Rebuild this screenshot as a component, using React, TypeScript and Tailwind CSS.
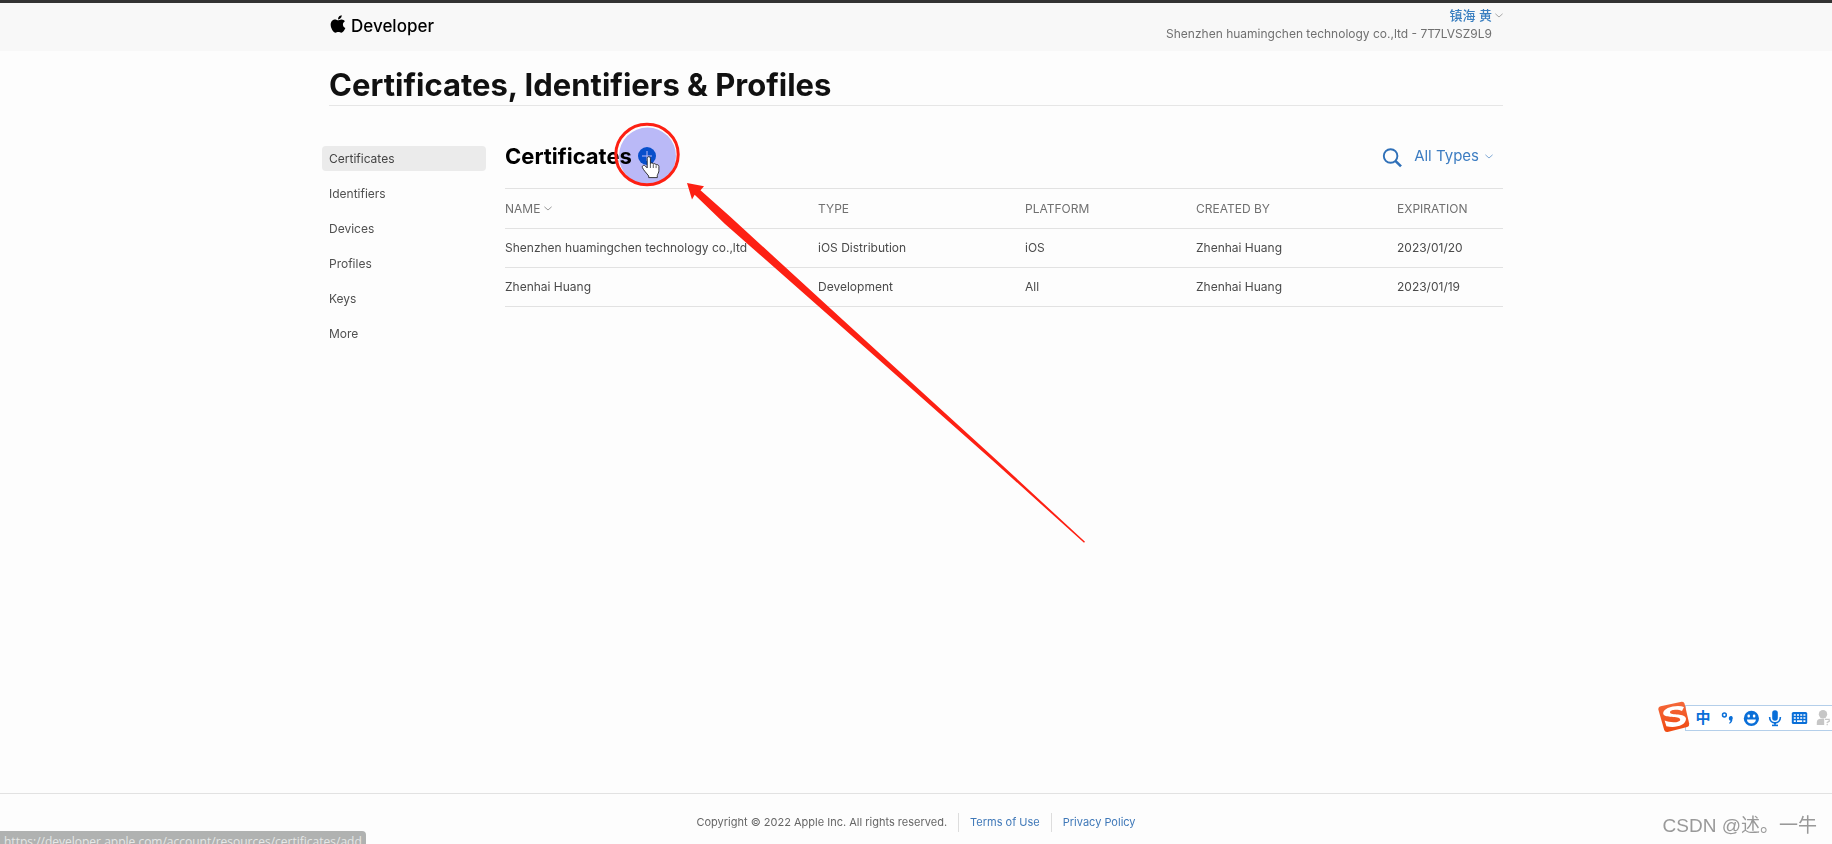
import { FaApple } from 'react-icons/fa';

type Certificate = {
  name: string;
  type: string;
  platform: string;
  createdBy: string;
  expiration: string;
};

const certificates: Certificate[] = [
  {
    name: 'Shenzhen huamingchen technology co.,ltd',
    type: 'iOS Distribution',
    platform: 'iOS',
    createdBy: 'Zhenhai Huang',
    expiration: '2023/01/20',
  },
  {
    name: 'Zhenhai Huang',
    type: 'Development',
    platform: 'All',
    createdBy: 'Zhenhai Huang',
    expiration: '2023/01/19',
  },
];

const sections = ['Certificates', 'Identifiers', 'Devices', 'Profiles', 'Keys', 'More'];

function Chevron({ className }: { className: string }) {
  return (
    <svg viewBox="0 0 8 5" className={className} fill="none" stroke="currentColor" aria-hidden="true">
      <path d="M0.4 0.8 L4 4 L7.6 0.8" />
    </svg>
  );
}

function Header() {
  return (
    <header className="border-t-[3px] border-[#333333] bg-[#f8f8f8]">
      <div className="mx-auto flex h-12 max-w-[1174px] items-start justify-between">
        <a href="#home" className="flex items-center gap-[3px] pt-[11px] text-[17px] leading-6 font-medium text-black">
          <FaApple className="-mt-1 -ml-px size-5" aria-hidden="true" />
          Developer
        </a>
        <div className="pt-1 text-right text-xs text-[#707070]">
          <button type="button" className="ml-auto flex items-center gap-[3px] text-[13px] leading-4 font-medium text-[#3a7fc0]">
            镇海 黄
            <Chevron className="h-[5px] w-2 text-[#a8a8a8]" />
          </button>
          <p className="pr-[11px] leading-[22px]">Shenzhen huamingchen technology co.,ltd - 7T7LVSZ9L9</p>
        </div>
      </div>
    </header>
  );
}

function Sidebar() {
  return (
    <nav aria-label="Resources" className="-ml-[7px] flex w-[164px] shrink-0 flex-col gap-[10px]">
      {sections.map((section, index) => (
        <a
          key={section}
          href={`#${section.toLowerCase()}`}
          aria-current={index === 0 ? 'page' : undefined}
          className={
            index === 0
              ? 'rounded-sm bg-[#ebebeb] px-[7px] leading-[25px] text-[#444444]'
              : 'px-[7px] leading-[25px] text-[#505050]'
          }
        >
          {section}
        </a>
      ))}
    </nav>
  );
}

function ClickHighlight() {
  return (
    <>
      <svg
        viewBox="0 0 66 66"
        className="pointer-events-none absolute -top-[23px] -left-6 size-[66px] max-w-none overflow-visible mix-blend-multiply"
        aria-hidden="true"
      >
        <circle cx="33.5" cy="32" r="28.5" fill="#bcbbf9" />
      </svg>
      <svg
        viewBox="0 0 66 66"
        className="pointer-events-none absolute -top-[23px] -left-6 size-[66px] max-w-none overflow-visible"
        aria-hidden="true"
      >
        <ellipse cx="33" cy="30.5" rx="31.2" ry="30.2" fill="none" stroke="#fd2013" strokeWidth="3" />
        <path
          d="M33.2 34.5 c0 -2.4 3.2 -2.4 3.2 0 v5 c.6 -1 2.7 -.8 2.9 .6 c.8 -.9 2.6 -.5 2.8 .8 c1 -.7 2.8 0 2.8 1.5 v4.4 c0 1.6 -1.2 3.2 -1.6 4.6 v2.2 h-8.6 v-1.6 c-1.8 -2.4 -5.2 -5.8 -6.3 -8.4 c-.6 -1.9 1.6 -3 3 -1.5 l1.8 1.8 z"
          fill="#ffffff"
          stroke="#222222"
          strokeWidth="0.9"
        />
        <path d="M36.4 39.5 v4.5 M39.3 40.5 v3.5 M42.1 41.5 v2.6" stroke="#333333" strokeWidth="0.8" />
      </svg>
      <svg
        viewBox="0 0 400 362"
        className="pointer-events-none absolute top-9 left-12 h-[362px] w-[400px] max-w-none"
        aria-hidden="true"
      >
        <path
          d="M1 0 L18 3.2 L14.5 7.2 L44 33.5 L157 137 L310.5 277 L399 358.8 L398 359.8 L306 277 L148 137 L39 41 L8.7 11.7 L6 16.5 Z"
          fill="#fd2013"
        />
      </svg>
    </>
  );
}

function CertificatesTable() {
  return (
    <table className="w-full table-fixed border-collapse text-left">
      <thead>
        <tr className="h-10 border-y border-[#e2e2e2] text-[#707070]">
          <th className="w-[313px] p-0 font-normal">
            <button type="button" className="flex items-center gap-1">
              NAME
              <Chevron className="h-[5px] w-2 text-[#999999]" />
            </button>
          </th>
          <th className="w-[207px] p-0 font-normal">TYPE</th>
          <th className="w-[171px] p-0 font-normal">PLATFORM</th>
          <th className="w-[201px] p-0 font-normal">CREATED BY</th>
          <th className="p-0 font-normal">EXPIRATION</th>
        </tr>
      </thead>
      <tbody>
        {certificates.map((certificate) => (
          <tr key={certificate.expiration} className="h-[39px] border-b border-[#e2e2e2] text-[#4a4a4a]">
            <td className="p-0">{certificate.name}</td>
            <td className="p-0">{certificate.type}</td>
            <td className="p-0">{certificate.platform}</td>
            <td className="p-0">{certificate.createdBy}</td>
            <td className="p-0">{certificate.expiration}</td>
          </tr>
        ))}
      </tbody>
    </table>
  );
}

function InputMethodBar() {
  return (
    <div className="fixed right-0 bottom-[113px] flex h-[26px] w-[147px] items-center border-y border-l border-[#b4cfea] bg-white pl-[5px] text-[#0a6fd8]">
      <svg viewBox="0 0 32 32" className="absolute -top-[5px] -left-[28px] size-8" aria-hidden="true">
        <defs>
          <linearGradient id="ime" x1="0" y1="0" x2="0" y2="1">
            <stop offset="0" stopColor="#f4683a" />
            <stop offset="1" stopColor="#f04a12" />
          </linearGradient>
        </defs>
        <path
          d="M2.6 5.2 L23.6 .8 Q26 .5 26.6 2.8 L31.2 22.6 Q31.6 25.2 29.2 26 L9.6 31 Q7 31.4 6.2 29 L.4 8.8 Q0 5.8 2.6 5.2 Z"
          fill="url(#ime)"
        />
        <path
          d="M26 6 C19 3.4 4.6 6.6 5.2 12.6 C5.8 17.8 21.8 14.6 22.2 18.4 C22.4 21.6 13 22.2 6.6 19.6 L8.4 25.2 C17 27.4 28 24.6 28 17.8 C27.8 11.6 12.4 14.6 12 11.4 C11.8 8.6 20 8 24 10 Z"
          fill="#ffffff"
        />
      </svg>
      <span className="w-6 shrink-0 text-center text-[15px] leading-6 font-bold">中</span>
      <svg viewBox="0 0 24 24" className="size-6 shrink-0" aria-hidden="true">
        <circle cx="9.4" cy="9" r="1.9" fill="none" stroke="currentColor" strokeWidth="1.5" />
        <path d="M13.8 12 a2 2 0 1 1 3.6 1.2 c0 2 -1 3.6 -2.8 4.6 l-.5 -.8 c1 -.7 1.4 -1.4 1.4 -2.4 c-1 0 -1.7 -.7 -1.7 -2.6 z" fill="currentColor" />
      </svg>
      <svg viewBox="0 0 24 24" className="size-6 shrink-0" aria-hidden="true">
        <circle cx="12.4" cy="12.4" r="7.6" fill="currentColor" />
        <rect x="8.5" y="8.4" width="2.4" height="3" rx="1" fill="#ffffff" />
        <rect x="13.9" y="8.4" width="2.4" height="3" rx="1" fill="#ffffff" />
        <path d="M7.9 13.4 h9 c0 5.4 -9 5.4 -9 0 z" fill="#ffffff" />
      </svg>
      <svg viewBox="0 0 24 24" className="size-6 shrink-0" fill="none" stroke="currentColor" aria-hidden="true">
        <rect x="9.2" y="4.2" width="5.6" height="10.6" rx="2.8" fill="currentColor" stroke="none" />
        <path d="M6.6 11 c0 7.8 10.8 7.8 10.8 0" strokeWidth="1.6" />
        <path d="M12 17 v1.8" strokeWidth="2" />
        <path d="M9 19.4 h6" strokeWidth="1.6" />
      </svg>
      <svg viewBox="0 0 24 24" className="size-6 shrink-0" aria-hidden="true">
        <rect x="4.8" y="6" width="15.4" height="12" rx="1.6" fill="currentColor" />
        <path
          d="M6.8 9 h2 M10 9 h2 M13.2 9 h2 M16.4 9 h2 M6.8 12 h2 M10 12 h2 M13.2 12 h2 M16.4 12 h2 M6.8 15.2 h2 M10 15.2 h5.2 M16.4 15.2 h2"
          stroke="#ffffff"
          strokeWidth="1.7"
        />
      </svg>
      <svg viewBox="0 0 24 24" className="size-6 shrink-0 text-[#c6c6c6]" fill="currentColor" aria-hidden="true">
        <circle cx="12" cy="8.2" r="4.2" />
        <path d="M5.8 19 v-2.6 q0 -3.4 4 -3.6 h5 q4 .2 4 3.6 v2.6 z" />
        <rect x="13.2" y="12.4" width="7" height="6.8" fill="#ffffff" />
        <path d="M14 13.4 h4.2 v2 l-2 1 v.8 M16.2 18 v1.2" fill="none" stroke="currentColor" strokeWidth="1.2" />
      </svg>
    </div>
  );
}

function Footer() {
  return (
    <footer className="border-t border-[#e2e2e2] pb-3 text-[11px] text-[#666666]">
      <div className="mx-auto flex max-w-[1174px] items-center justify-center pt-[19px] leading-[19px]">
        <p className="pr-[11px]">Copyright © 2022 Apple Inc. All rights reserved.</p>
        <a href="#terms" className="border-l border-[#dddddd] px-[11px] text-[#3f78b8]">
          Terms of Use
        </a>
        <a href="#privacy" className="border-l border-[#dddddd] pl-[11px] text-[#3f78b8]">
          Privacy Policy
        </a>
      </div>
    </footer>
  );
}

export default function App() {
  return (
    <div className="flex min-h-screen flex-col overflow-hidden bg-[#fdfdfd] font-['Inter','Noto_Sans_CJK_SC',sans-serif] text-xs">
      <Header />
      <main className="mx-auto w-full max-w-[1174px] grow">
        <h1 className="border-b border-[#e6e6e6] pt-[14px] text-[31px] leading-10 font-bold text-[#111111]">
          Certificates, Identifiers &amp; Profiles
        </h1>
        <div className="flex gap-[19px] pt-10">
          <Sidebar />
          <section className="min-w-0 grow">
            <div className="flex items-start justify-between pb-[22px]">
              <div className="flex h-5 items-center gap-1.5">
                <h2 className="text-[22px] leading-5 font-bold text-black">Certificates</h2>
                <div className="relative size-[18px]">
                  <button
                    type="button"
                    aria-label="Add certificate"
                    className="flex size-[18px] items-center justify-center rounded-full bg-[#0a6bd0]"
                  >
                    <svg viewBox="0 0 10 10" className="size-[10px]" stroke="#ffffff" aria-hidden="true">
                      <path d="M5 0 V10 M0 5 H10" />
                    </svg>
                  </button>
                  <ClickHighlight />
                </div>
              </div>
              <div className="flex h-5 items-center gap-3 pr-[10px]">
                <button type="button" aria-label="Search">
                  <svg viewBox="0 0 20 20" className="size-5 overflow-visible" fill="none" stroke="#2f70b8" aria-hidden="true">
                    <circle cx="8.6" cy="10" r="6.8" strokeWidth="1.9" />
                    <path d="M13.4 14.8 L19 20.4" strokeWidth="2.6" />
                  </svg>
                </button>
                <button type="button" className="flex items-center gap-1.5 text-[15px] leading-5 text-[#3d7dc2]">
                  All Types
                  <Chevron className="h-[5px] w-2 text-[#7fa8d4]" />
                </button>
              </div>
            </div>
            <CertificatesTable />
          </section>
        </div>
      </main>
      <Footer />
      <InputMethodBar />
      <p className="fixed right-[15px] bottom-[6px] font-['Liberation_Sans','Noto_Sans_CJK_SC',sans-serif] text-[19px] leading-6 text-[#999999]">
        CSDN @述。一牛
      </p>
      <p className="fixed -bottom-[7px] left-0 rounded-tr-sm bg-[#b0b2b1] pt-0.5 pr-1 pl-1 font-['Open_Sans',sans-serif] text-xs leading-[18px] text-[#e6e8e7]">
        https://developer.apple.com/account/resources/certificates/add
      </p>
    </div>
  );
}
